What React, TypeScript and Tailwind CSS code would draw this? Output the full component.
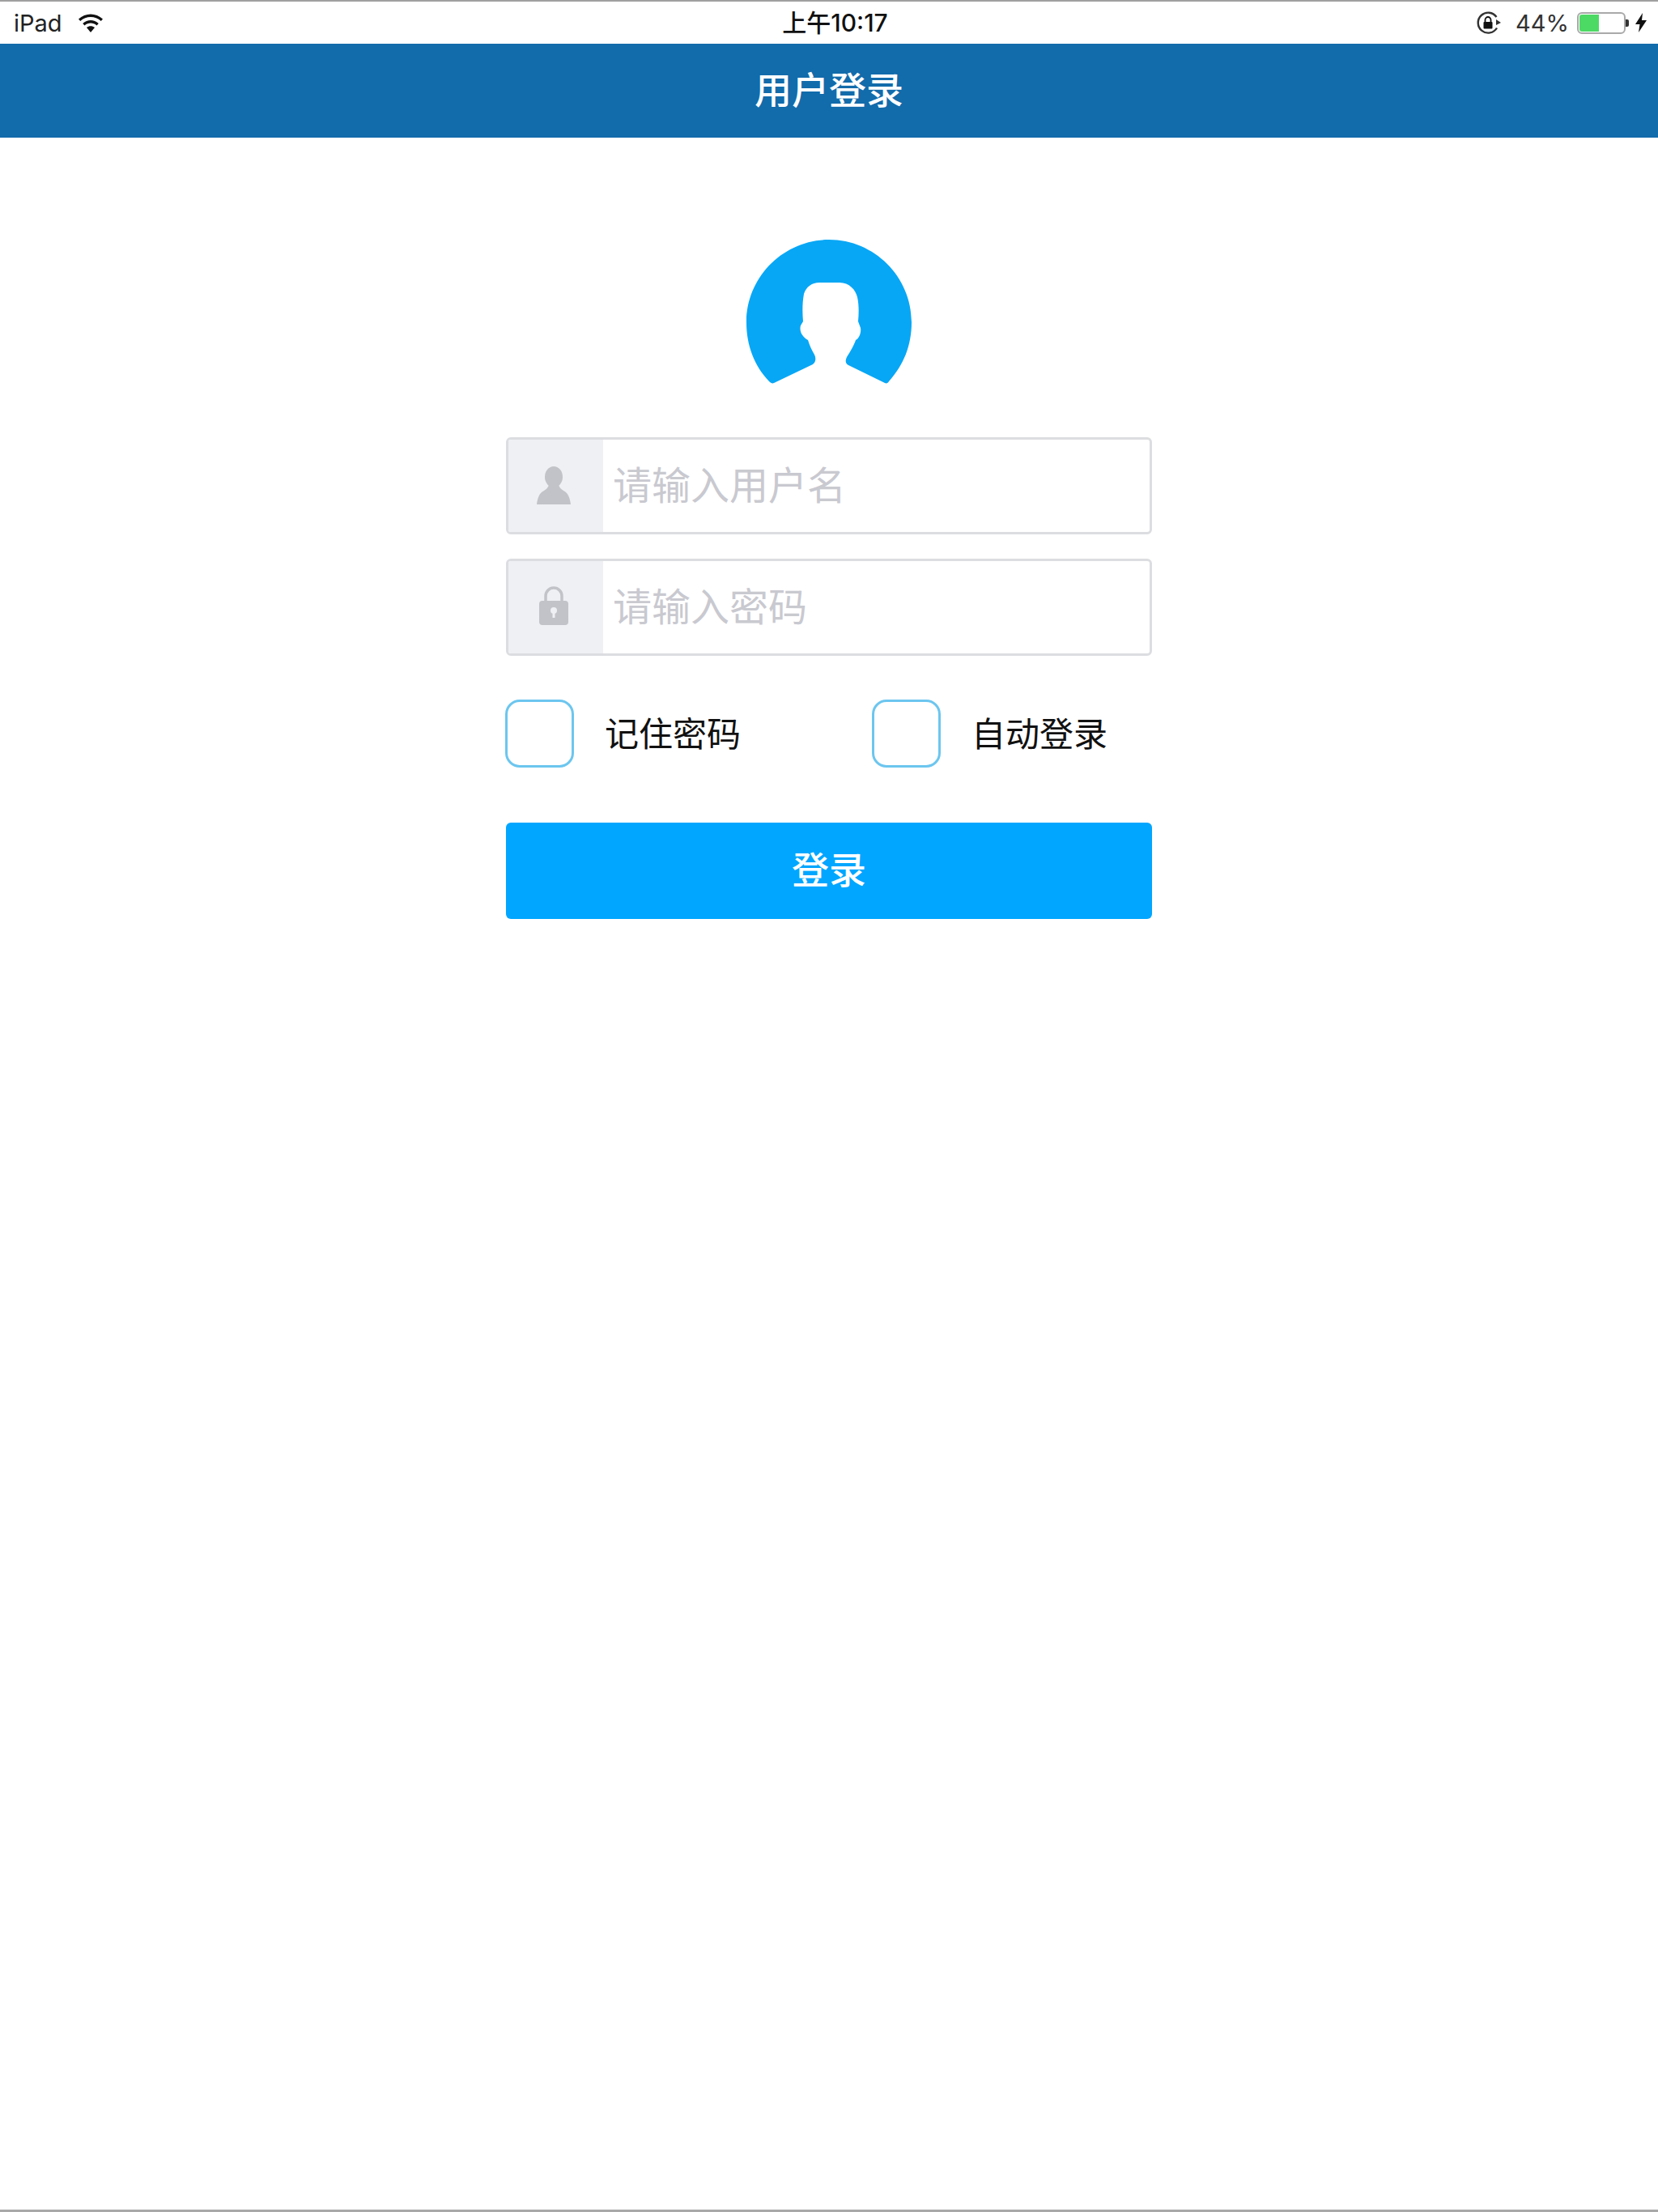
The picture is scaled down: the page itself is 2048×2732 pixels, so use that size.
import React from 'react';

const cjk = "font-['Liberation_Sans','Noto_Sans_CJK_SC',sans-serif]";
const statusFont = "font-['Inter','Noto_Sans_CJK_SC',sans-serif]";

function WifiIcon() {
  return (
    <svg viewBox="0 0 32 26" className="w-[32px] h-[26px]">
      <path d="M1 8.5C9.5 .5 22.5 .5 31 8.5l-2.2 2.4C21.5 4.3 10.5 4.3 3.2 10.9z" fill="#111" />
      <path d="M6.2 14C12 8.8 20 8.8 25.8 14l-2.3 2.4C19 12.6 13 12.6 8.5 16.4z" fill="#111" />
      <path d="M11 19c3-2.5 7-2.5 10 0l-5 6z" fill="#111" />
    </svg>
  );
}

function OrientationLock() {
  return (
    <svg viewBox="0 0 32 30" className="w-[32px] h-[30px]">
      <path d="M26 21.5A12.5 12.5 0 1 1 25.5 8" fill="none" stroke="#333" strokeWidth="2.4" />
      <path d="M25 11l6 4-6 3z" fill="#333" />
      <rect x="9.5" y="14" width="11" height="8.5" rx="1" fill="#111" />
      <path d="M11.5 14v-2.5a3.5 3.5 0 0 1 7 0V14" fill="none" stroke="#111" strokeWidth="1.8" />
    </svg>
  );
}

function Battery() {
  return (
    <div className="flex items-center">
      <div className="w-[60px] h-[27px] rounded-[6px] border-2 border-[#a9a9a9] p-[1px] bg-white">
        <div className="w-[24px] h-full rounded-l-[3px] bg-[#4cd964]" />
      </div>
      <div className="w-[4px] h-[9px] rounded-r-[2px] bg-[#333]" />
    </div>
  );
}

function Bolt() {
  return (
    <svg viewBox="0 0 14 24" className="w-[14px] h-[24px]">
      <path d="M9 0L0 14h5.5L4 24l10-15H8z" fill="#111" />
    </svg>
  );
}

function StatusBar() {
  return (
    <div className={`h-[54px] shrink-0 border-t-2 border-[#a0a0a0] bg-white grid grid-cols-3 items-center pl-[17px] pr-[14px] text-[#222] ${statusFont}`}>
      <div className="flex items-center gap-[19px]">
        <span className="text-[29px] leading-none">iPad</span>
        <WifiIcon />
      </div>
      <div className="pl-[12px] text-center text-[30px] leading-none font-medium text-[#111]">上午10:17</div>
      <div className="flex items-center justify-end">
        <OrientationLock />
        <span className="ml-[17px] mr-[10px] text-[29px] leading-none text-[#333]">44%</span>
        <Battery />
        <div className="ml-[8px]"><Bolt /></div>
      </div>
    </div>
  );
}

function Avatar() {
  return (
    <svg viewBox="0 0 204 180" className="w-[204px] h-[180px] mx-auto">
      <path
        d="M28 175 C10 156 0 131 0 102 C0 46 46 0 102 0 C158 0 204 46 204 102 C204 131 194 155 176 175 C175 177 173 178 171 177 L126 155 C122 153 122 149 124 145 C128 139 133 130 135 124 C139 122 142 115 141 109 L138 101 C139 90 139 80 137 71 C135 62 127 53 115 53 L90 53 C81 53 74 58 71 67 C69 78 69 90 70 101 L67 106 C65 113 69 120 76 124 C78 131 81 137 84 142 C86 146 86 151 82 154 L34 177 C32 178 30 177 28 175 Z"
        fill="#08a7f5"
      />
    </svg>
  );
}

function UserIcon() {
  return (
    <svg viewBox="0 0 42 47" className="w-[42px] h-[47px] -ml-[5px] -mt-[1px]">
      <ellipse cx="21" cy="13" rx="11" ry="13" fill="#c2c3c8" />
      <path d="M15 23h12c1 3 3 5 6 7 6 3 8 9 9 17H0c1-8 3-14 9-17 3-2 5-4 6-7z" fill="#c2c3c8" />
    </svg>
  );
}

function LockIcon() {
  return (
    <svg viewBox="0 0 36 48" className="w-[36px] h-[48px] -ml-[5px] -mt-[5px]">
      <path d="M8 20v-8a10 10 0 0 1 20 0v8" fill="none" stroke="#c2c3c8" strokeWidth="3.5" />
      <rect x="0" y="18" width="36" height="30" rx="4" fill="#c2c3c8" />
      <circle cx="18" cy="30" r="4" fill="#eff0f4" />
      <rect x="16.5" y="31" width="3" height="8" fill="#eff0f4" />
    </svg>
  );
}

function InputRow({ icon, placeholder }: { icon: React.ReactNode; placeholder: string }) {
  return (
    <div className="h-[120px] flex rounded-[6px] border-[3px] border-[#dcdde0] overflow-hidden bg-white">
      <div className="w-[117px] shrink-0 bg-[#eff0f4] flex items-center justify-center">{icon}</div>
      <input
        placeholder={placeholder}
        className={`flex-1 min-w-0 pl-[12px] pt-[2px] text-[48px] outline-none placeholder:text-[#c9c9d0] ${cjk}`}
      />
    </div>
  );
}

function CheckItem({ label }: { label: string }) {
  return (
    <label className="flex items-center gap-[38px]">
      <span className="w-[85px] h-[84px] rounded-[18px] border-[3px] border-[#6cc6ef] bg-white" />
      <span className={`pt-[3px] text-[42px] leading-none text-[#111] ${cjk}`}>{label}</span>
    </label>
  );
}

export default function App() {
  return (
    <div className="h-[2732px] bg-white flex flex-col border-b-[3px] border-[#a8a8a8]">
      <StatusBar />
      <div className={`h-[116px] shrink-0 bg-[#126bab] flex items-center justify-center text-white text-[46px] font-medium ${cjk}`}>
        用户登录
      </div>

      <div className="w-[798px] mx-auto pt-[126px]">
        <Avatar />
        <div className="mt-[64px] flex flex-col gap-[30px]">
          <InputRow icon={<UserIcon />} placeholder="请输入用户名" />
          <InputRow icon={<LockIcon />} placeholder="请输入密码" />
        </div>
        <div className="mt-[54px] -ml-[1px] grid grid-cols-[453px_1fr]">
          <CheckItem label="记住密码" />
          <CheckItem label="自动登录" />
        </div>
        <button className={`mt-[68px] w-full h-[119px] rounded-[6px] bg-[#00a6ff] text-white text-[46px] font-medium ${cjk}`}>
          登录
        </button>
      </div>
    </div>
  );
}
